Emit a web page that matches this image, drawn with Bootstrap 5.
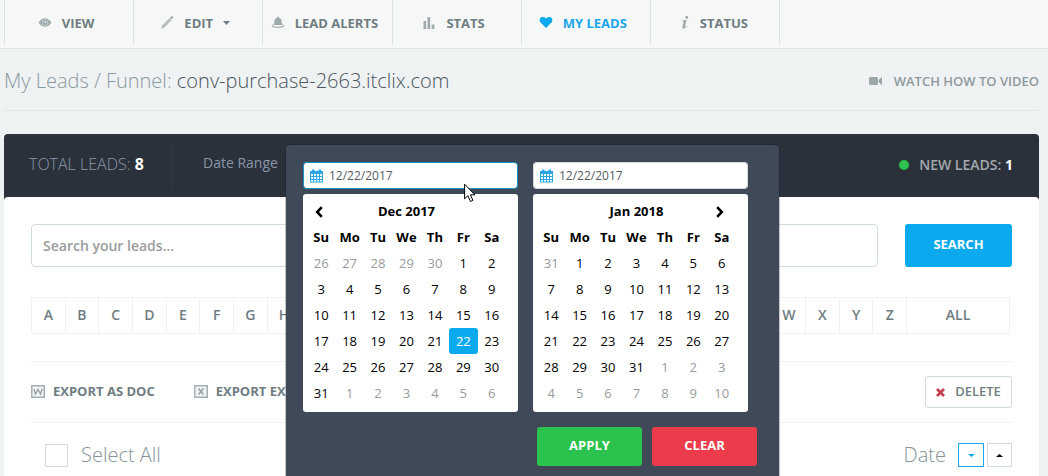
<!DOCTYPE html>
<html lang="en">
<head>
<meta charset="utf-8">
<meta name="viewport" content="width=device-width, initial-scale=1">
<title>My Leads</title>
<link href="https://cdn.jsdelivr.net/npm/bootstrap@5.3.0/dist/css/bootstrap.min.css" rel="stylesheet">
<style>
  body { font-family: "Open Sans", sans-serif; font-size: 13px; line-height: 20px; color: #6f7d82; background: #eef2f3; }
  a { color: inherit; text-decoration: none; }
  svg { flex: none; }
  .top-bar { background: #f6f8f7; border-bottom: 1px solid #d9e6e4; padding: 0 4px 3px; }
  .top-menu { display: grid; grid-template-columns: repeat(6, 1fr); max-width: 776px; border-right: 1px solid #dae4e6; }
  .top-menu a { height: 45px; padding: 1px 6px 0 0; border-left: 1px solid #dae4e6; font-weight: 700; gap: 10px; }
  .top-menu svg { fill: #a0abae; }
  .top-menu a.active { color: #1ba5ea; }
  .top-menu a.active svg { fill: #0ba9ed; }
  .page-body { padding: 0 9px 0 4px; }
  .page-head { height: 62px; border-bottom: 1px solid #e0e8e9; padding-top: 3px; }
  .page-title { font-size: 20px; line-height: 28px; font-weight: 300; color: #8b999e; }
  .page-title span { color: #4b565e; }
  .video-link { font-weight: 600; color: #8f9a9e; gap: 11px; }
  .panel { margin-top: 23px; background: #2b313b; border-radius: 4px 4px 0 0; }
  .panel-head { height: 63px; padding: 0 26px 0 25px; }
  .total { font-size: 16px; font-weight: 300; color: #8a96a6; width: 144px; height: 45px; padding-bottom: 3px; border-right: 1px solid #323846; }
  .total b, .fresh b { font-weight: 700; color: #fff; }
  .range { padding-left: 30px; font-size: 14px; color: #8a96a6; padding-bottom: 6px; }
  .fresh { font-size: 14px; font-weight: 600; color: #a3a9ac; gap: 10px; padding-bottom: 2px; }
  .dot { width: 10px; height: 10px; border-radius: 50%; background: #2bc24e; }
  .panel-main { background: #fff; border-radius: 4px 4px 0 0; padding: 27px 27px 0; }
  .search-form { gap: 27px; }
  .search-box { height: 43px; border: 1px solid #cfdcdb; border-radius: 4px; padding: 0 11px; font-size: 14px; font-weight: 600; color: #6f7d82; box-shadow: none; }
  .search-box::placeholder { color: #999c9c; opacity: 1; }
  .btn-flat { border: 0; border-radius: 3px; color: #fff; font-size: 13px; font-weight: 700; padding: 0 0 2px; }
  .btn-flat:hover { color: #fff; }
  .btn-search { width: 107px; height: 43px; background: #0ba9ed; }
  .letters { margin: 30px 2px 27px 0; border: 1px solid #edf1f1; border-left: 0; }
  .letters a { flex: 1 1 0; height: 35px; padding-bottom: 2px; border-left: 1px solid #edf1f1; font-size: 14px; font-weight: 600; }
  .letters a.every { flex: none; width: 103px; }
  .tools { height: 62px; border-top: 1px solid #edf1f1; border-bottom: 1px solid #edf1f1; font-weight: 700; }
  .export-links { gap: 39px; padding-bottom: 2px; }
  .export-links a { gap: 8px; }
  .btn-delete { width: 87px; height: 32px; border: 1px solid #cfdcdb; border-radius: 3px; font-size: 13px; font-weight: 600; color: #6f7d82; padding: 0; gap: 10px; }
  .list-head { height: 64px; padding-left: 14px; font-size: 20px; font-weight: 300; color: #84939a; }
  .list-head label { padding-left: 13px; }
  .tick { width: 23px; height: 23px; margin: 0; border: 1px solid #cfdcde; }
  .tick.form-check-input { border-radius: 0; margin: 0; }
  .sorters { gap: 3px; }
  .sorter { width: 25px; height: 24px; border: 1px solid #cfdcdb; background: #fff; color: #000; }
  .sorter.active { width: 26px; border-color: #1ba5ea; color: #0ba9ed; }
  .picker { left: 282px; top: 11px; width: 493px; padding: 17px 31px 10px 17px; background: #404957; border-radius: 4px 4px 0 0; box-shadow: 0 0 0 1px rgba(20, 28, 38, .25); z-index: 5; }
  .months { display: grid; grid-template-columns: 1fr 1fr; column-gap: 15px; }
  .date-box { height: 27px; padding: 0 0 0 25px; border: 1px solid #d5dadc; border-radius: 3px; font-size: 12px; line-height: 20px; color: #565b5f; box-shadow: none; }
  .date-box.picked { border-color: #1c8fcb; }
  .date-icon { left: 7px; top: 7px; }
  .calendar { margin-top: 5px; background: #fff; border-radius: 3px; padding: 4px 12px 6px 4px; }
  .calendar table { width: 100%; table-layout: fixed; text-align: center; color: #000; }
  .calendar th, .calendar td { height: 26px; padding: 0; }
  .calendar th { font-weight: 700; }
  .calendar .off { color: #979b9c; }
  .calendar .on { background: #0ba9ed; color: #fff; border-radius: 3px; }
  .arrow { border: 0; background: none; padding: 1px 4px 0 0; width: 100%; height: 26px; }
  .picker-foot { margin: 15px -9px 0 0; gap: 10px; }
  .picker-foot .btn-flat { width: 105px; height: 39px; }
  .btn-apply { background: #2bc24e; }
  .btn-clear { background: #ec3c4b; }
  .pointer { left: 178px; top: 38px; }
</style>
</head>
<body>
<nav class="top-bar" aria-label="Main">
  <div class="top-menu">
    <a href="#" class="d-flex align-items-center justify-content-center"><svg width="14" height="14" viewBox="0 0 14 14"><path fill-rule="evenodd" d="M.5 6.500C2.500 3.200 5 2.200 7 2.200s4.500 1 6.500 4.300C11.500 9.800 9 10.800 7 10.800S2.500 9.800 .5 6.500zM7 3.400a3 3 0 1 0 0 6a3 3 0 1 0 0-6z"/><circle cx="7" cy="6.400" r="2.700"/><circle cx="7.300" cy="6" r=".9" fill="#dfe4e4"/></svg>VIEW</a>
    <a href="#" class="d-flex align-items-center justify-content-center"><svg width="14" height="14" viewBox="0 0 14 14"><path opacity=".75" d="M1 13l1.300-3.800L9.600 2l2 2-7.200 7.400z"/><path d="M10.200 1.500l1.200-1.200q.7-.5 1.400.2t.2 1.500l-1.100 1.200z"/></svg>EDIT<svg width="7" height="4" viewBox="0 0 7 4"><path fill="#6f7d82" d="M0 0h7L3.500 4z"/></svg></a>
    <a href="#" class="d-flex align-items-center justify-content-center"><svg width="14" height="14" viewBox="0 0 14 14"><path d="M7 .8c.7 0 1 .4 1 1 2 .7 2.600 2 2.700 4 0 1.700.5 2.400 1.300 3.200H2c.8-.8 1.300-1.500 1.300-3.200.1-2 .7-3.300 2.700-4 0-.6.300-1 1-1z"/><path d="M2 8.500C.6 9 .6 9.500 .8 10.300 1.500 12.500 12.500 12.500 13.200 10.300 13.400 9.500 13.400 9 12 8.500l.2 1.200C11 11 3 11 1.800 9.700z"/></svg>LEAD ALERTS</a>
    <a href="#" class="d-flex align-items-center justify-content-center"><svg width="14" height="14" viewBox="0 0 14 14"><path d="M1.500 5h2.700v8H1.500zM5.500 1h2.700v12H5.500zM9.700 8.500h2.800V13H9.700z"/></svg>STATS</a>
    <a href="#" class="active d-flex align-items-center justify-content-center" aria-current="page"><svg width="14" height="14" viewBox="0 0 14 14"><path d="M7 12L1.300 6.300C-.3 4.100 1 1.100 3.700 .9 5.200.8 6.400 1.600 7 2.600c.6-1 1.800-1.800 3.300-1.700 2.700.2 4 3.200 2.400 5.400z"/></svg>MY LEADS</a>
    <a href="#" class="d-flex align-items-center justify-content-center"><svg width="14" height="14" viewBox="-5 0 14 14"><ellipse cx="5.800" cy="1.500" rx="1.500" ry="1.400"/><path d="M1.200 4.500L5.700 4 4 10.300c-.2.800.4.700 1.600-.6l.5.500C4.500 12.100 3.200 12.700 2.200 12.600 1 12.500 1.100 11.500 1.400 10.500L2.800 5.400 1 5.200z"/></svg>STATUS</a>
  </div>
</nav>

<main class="page-body">
  <header class="page-head d-flex align-items-center justify-content-between">
    <h1 class="page-title m-0">My Leads / Funnel: <span>conv-purchase-2663.itclix.com</span></h1>
    <a href="#" class="video-link d-flex align-items-center"><svg width="14" height="10" viewBox="0 0 14 10"><path fill="#9ca7aa" d="M1.500 1h6Q9 1 9 2.500v5Q9 9 7.500 9h-6Q0 9 0 7.500v-5Q0 1 1.500 1zM9.600 4L13 .8v8.400L9.600 6z"/></svg>WATCH HOW TO VIDEO</a>
  </header>

  <section class="panel position-relative">
    <div class="panel-head d-flex align-items-center">
      <div class="total d-flex align-items-center"><span>TOTAL LEADS: <b>8</b></span></div>
      <div class="range">Date Range</div>
      <div class="fresh d-flex align-items-center ms-auto"><span class="dot"></span><span>NEW LEADS: <b>1</b></span></div>
    </div>

    <div class="panel-main">
      <form class="search-form d-flex">
        <input type="text" class="form-control search-box" placeholder="Search your leads..." aria-label="Search your leads">
        <button type="button" class="btn btn-flat btn-search flex-shrink-0">SEARCH</button>
      </form>
      <div class="letters d-flex" id="letters"></div>
      <div class="tools d-flex align-items-center">
        <div class="export-links d-flex">
          <a href="#" class="d-flex align-items-center"><svg width="14" height="13" viewBox="0 0 14 13"><path fill="#f2f5f5" stroke="#a3afb3" stroke-width="1.500" d="M.75.75h12.500v11.500H.75z"/><path fill="none" stroke="#96a2a6" stroke-width="1.400" d="M2.800 4l1.700 5L7 4.500 9.500 9l1.700-5"/></svg>EXPORT AS DOC</a>
          <a href="#" class="d-flex align-items-center"><svg width="14" height="13" viewBox="0 0 14 13"><path fill="#f2f5f5" stroke="#a3afb3" stroke-width="1.500" d="M.75.75h12.500v11.500H.75z"/><path fill="none" stroke="#96a2a6" stroke-width="1.700" d="M4.500 3.500l5 6M9.500 3.500l-5 6"/></svg>EXPORT EXCEL</a>
        </div>
        <button type="button" class="btn btn-delete ms-auto d-flex align-items-center justify-content-center"><svg width="9" height="9" viewBox="0 0 9 9"><path stroke="#c8404e" stroke-width="2.800" d="M1 1l7 7M8 1L1 8"/></svg>DELETE</button>
      </div>
      <div class="list-head d-flex align-items-center">
        <input type="checkbox" class="form-check-input tick" id="all">
        <label for="all" class="flex-grow-1">Select All</label>
        <span class="me-2 pe-1">Date</span>
        <div class="sorters d-flex">
          <button type="button" class="sorter active d-flex align-items-center justify-content-center p-0" aria-label="Descending"><svg width="7" height="3" viewBox="0 0 7 3"><path fill="currentColor" d="M0 0h7L3.500 3z"/></svg></button>
          <button type="button" class="sorter d-flex align-items-center justify-content-center p-0" aria-label="Ascending"><svg width="7" height="3" viewBox="0 0 7 3"><path fill="currentColor" d="M0 3h7L3.500 0z"/></svg></button>
        </div>
      </div>
    </div>

    <div class="picker position-absolute" role="dialog" aria-label="Date range">
      <div class="months">
        <div>
          <div class="position-relative">
            <input type="text" class="form-control date-box picked" value="12/22/2017" aria-label="From">
            <svg class="date-icon position-absolute" width="13" height="14" viewBox="0 0 13 14"><path fill="#2ba6e6" d="M0 2h2V.5h2.500V2h4V.5H11V2h2v11.500H0z"/><path fill="#fff" d="M1 5h2v2H1zM4 5h2v2H4zM7 5h2v2H7zM10 5h2v2h-2zM1 8h2v2H1zM4 8h2v2H4zM7 8h2v2H7zM10 8h2v2h-2zM1 11h2v1.500H1zM4 11h2v1.500H4zM7 11h2v1.500H7zM10 11h2v1.500h-2z"/></svg>
          </div>
          <div class="calendar"><table>
            <thead>
              <tr><th><button type="button" class="arrow d-flex align-items-center justify-content-center" aria-label="Previous month"><svg width="8" height="12" viewBox="0 0 8 12"><path fill="none" stroke="#000" stroke-width="2.600" d="M6.800 1.200L2.200 6l4.600 4.800"/></svg></button></th><th colspan="5">Dec 2017</th><th></th></tr>
              <tr><th>Su</th><th>Mo</th><th>Tu</th><th>We</th><th>Th</th><th>Fr</th><th>Sa</th></tr>
            </thead>
            <tbody data-lead="26" data-lead-end="30" data-days="31" data-on="22"></tbody>
          </table></div>
        </div>
        <div>
          <div class="position-relative">
            <input type="text" class="form-control date-box" value="12/22/2017" aria-label="To">
            <svg class="date-icon position-absolute" width="13" height="14" viewBox="0 0 13 14"><path fill="#2ba6e6" d="M0 2h2V.5h2.500V2h4V.5H11V2h2v11.500H0z"/><path fill="#fff" d="M1 5h2v2H1zM4 5h2v2H4zM7 5h2v2H7zM10 5h2v2h-2zM1 8h2v2H1zM4 8h2v2H4zM7 8h2v2H7zM10 8h2v2h-2zM1 11h2v1.500H1zM4 11h2v1.500H4zM7 11h2v1.500H7zM10 11h2v1.500h-2z"/></svg>
          </div>
          <div class="calendar"><table>
            <thead>
              <tr><th></th><th colspan="5">Jan 2018</th><th><button type="button" class="arrow d-flex align-items-center justify-content-center" aria-label="Next month"><svg width="8" height="12" viewBox="0 0 8 12"><path fill="none" stroke="#000" stroke-width="2.600" d="M1.200 1.200L5.800 6l-4.600 4.800"/></svg></button></th></tr>
              <tr><th>Su</th><th>Mo</th><th>Tu</th><th>We</th><th>Th</th><th>Fr</th><th>Sa</th></tr>
            </thead>
            <tbody data-lead="31" data-lead-end="31" data-days="31"></tbody>
          </table></div>
        </div>
      </div>
      <div class="picker-foot d-flex justify-content-end">
        <button type="button" class="btn btn-flat btn-apply">APPLY</button>
        <button type="button" class="btn btn-flat btn-clear">CLEAR</button>
      </div>
      <svg class="pointer position-absolute" width="13" height="20" viewBox="0 0 13 20"><path fill="#fff" stroke="#000" d="M.6 1.200v14.600l3.300-3.100 2.500 5.800 2.500-1.100-2.500-5.600h4.500z"/></svg>
    </div>
  </section>
</main>

<script src="https://cdn.jsdelivr.net/npm/bootstrap@5.3.0/dist/js/bootstrap.bundle.min.js"></script>
<script>
  // Alphabet filter
  document.getElementById('letters').innerHTML =
    [...'ABCDEFGHIJKLMNOPQRSTUVWXYZ', 'ALL'].map(t =>
      `<a href="#" class="d-flex align-items-center justify-content-center${t === 'ALL' ? ' every' : ''}">${t}</a>`).join('');

  // Six weeks per month, padded with days of the neighbouring months
  document.querySelectorAll('.calendar tbody').forEach(body => {
    const { lead, leadEnd, days, on } = body.dataset;
    const cells = [];
    for (let d = +lead; d <= +leadEnd; d++) cells.push([d, 'off']);
    for (let d = 1; d <= +days; d++) cells.push([d, d === +on ? 'on' : '']);
    for (let d = 1; cells.length < 42; d++) cells.push([d, 'off']);
    for (let i = 0; i < 42; i += 7) {
      const row = body.insertRow();
      cells.slice(i, i + 7).forEach(([d, cls]) => {
        const cell = row.insertCell();
        cell.textContent = d;
        cell.className = cls;
      });
    }
  });
</script>
</body>
</html>
